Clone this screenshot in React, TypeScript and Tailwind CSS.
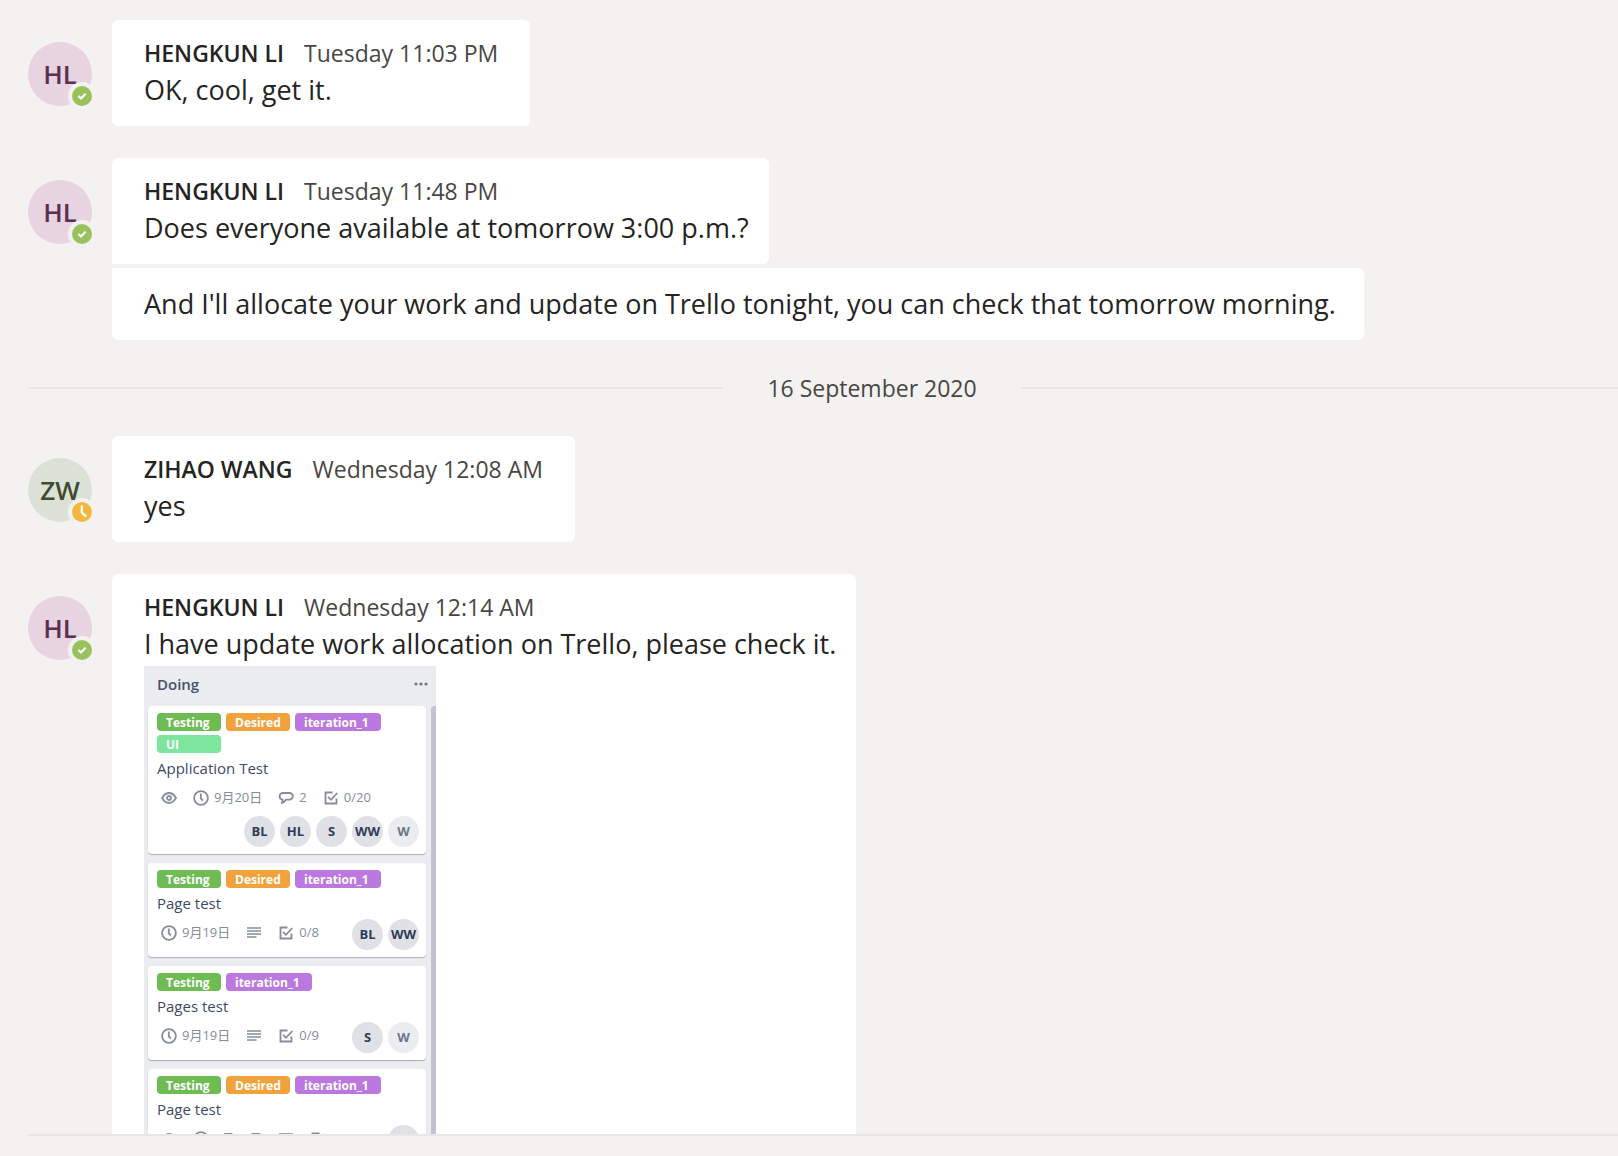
import React from "react";

type Presence = "available" | "away";

const PEOPLE = {
  HL: { initials: "HL", name: "HENGKUN LI", presence: "available" as Presence, tone: "bg-[#e8d4e0] text-[#5b2f4f]" },
  ZW: { initials: "ZW", name: "ZIHAO WANG", presence: "away" as Presence, tone: "bg-[#dbe1d7] text-[#404a2f]" },
};

function PresenceBadge({ presence }: { presence: Presence }) {
  return (
    <svg
      viewBox="0 0 28 28"
      role="img"
      aria-label={presence}
      className="absolute -right-1 -bottom-1 size-7"
    >
      <circle cx="14" cy="14" r="14" fill="#f3f2f0" />
      {presence === "available" ? (
        <>
          <circle cx="14" cy="14" r="10" fill="#9ac25c" />
          <path d="M10.4 14l2.500 2.500 4.800-4.800" fill="none" stroke="#fff" strokeWidth="2.200" />
        </>
      ) : (
        <>
          <circle cx="14" cy="14" r="10" fill="#f5b83f" />
          <path d="M13.8 7.4v7.2l4.4 4" fill="none" stroke="#fff" strokeWidth="2.200" />
        </>
      )}
    </svg>
  );
}

function Avatar({ who }: { who: keyof typeof PEOPLE }) {
  const p = PEOPLE[who];
  return (
    <div
      className={`relative mt-[22px] flex size-16 shrink-0 items-center justify-center rounded-full text-[26px] leading-none font-semibold ${p.tone}`}
    >
      {p.initials}
      <PresenceBadge presence={p.presence} />
    </div>
  );
}

function Message({
  who,
  time,
  text,
  followUp,
  children,
}: {
  who: keyof typeof PEOPLE;
  time: string;
  text: string;
  followUp?: string;
  children?: React.ReactNode;
}) {
  return (
    <article className="flex items-start gap-5">
      <Avatar who={who} />
      <div className="flex flex-col items-start gap-1">
        <div className={`rounded-md bg-white px-8 pt-[15px] pb-[17px] ${followUp ? "rounded-bl-none" : ""}`}>
          <header className="flex h-9 items-center gap-5 text-[23px]">
            <h2 className="font-semibold">{PEOPLE[who].name}</h2>
            <time className="text-[#484644]">{time}</time>
          </header>
          <p className="-mr-3 h-[38px] text-[27px] leading-[38px]">{text}</p>
          {children}
        </div>
        {followUp && (
          <div className="rounded-md rounded-tl-none bg-white py-4 pr-7 pl-8">
            <p className="text-[27px] leading-10">{followUp}</p>
          </div>
        )}
      </div>
    </article>
  );
}

const iconProps = {
  viewBox: "0 0 16 16",
  fill: "none",
  stroke: "currentColor",
  strokeWidth: 1.8,
  className: "size-4 shrink-0",
  "aria-hidden": true,
};

const EyeIcon = () => (
  <svg {...iconProps}>
    <path d="M1 8c2-3.400 4.400-5 7-5s5 1.600 7 5c-2 3.400-4.400 5-7 5s-5-1.600-7-5z" />
    <circle cx="8" cy="8" r="2" />
  </svg>
);
const ClockIcon = () => (
  <svg {...iconProps}>
    <circle cx="8" cy="8" r="6.900" />
    <path d="M7.800 3.500v5l2 2" />
  </svg>
);
const CommentIcon = () => (
  <svg {...iconProps}>
    <path
      d="M5 3h6.500a3.300 3.300 0 0 1 0 6.600H8.200C7 11.500 5.500 12.800 3.600 13c.9-1 1.200-2.200 1.100-3.400C2.800 9.400 1.600 8 1.600 6.300 1.600 4.500 3.100 3 5 3z"
      strokeLinejoin="round"
    />
  </svg>
);
const ChecklistIcon = () => (
  <svg {...iconProps}>
    <path d="M9.500 2.500h-7v11h11V8.500" />
    <path d="M5 6.800l3 3 6.300-6.800" />
  </svg>
);
const DescriptionIcon = () => (
  <svg {...iconProps}>
    <path d="M1 3h14M1 6h14M1 9h14M1 12h9.500" strokeWidth="1.700" />
  </svg>
);

const LABELS = {
  Testing: "w-16 bg-[#6fbb54]",
  Desired: "w-16 bg-[#f2a23c]",
  iteration_1: "w-[86px] bg-[#bb78de]",
  UI: "w-16 bg-[#7ee59e]",
};

function Label({ name }: { name: keyof typeof LABELS }) {
  return (
    <span className={`h-[18px] rounded px-[9px] text-[12px] leading-5 font-bold text-white ${LABELS[name]}`}>
      {name}
    </span>
  );
}

function Members({ initials }: { initials: string[] }) {
  return (
    <div className="ml-auto flex gap-[5px]">
      {initials.map((m) => (
        <span
          key={m}
          className={`flex size-[31px] items-center justify-center rounded-full text-[13px] font-bold ${
            m === "W" ? "bg-[#ebecf0] text-[#6b7488]" : "bg-[#dfe1e6] text-[#2f3b57]"
          }`}
        >
          {m}
        </span>
      ))}
    </div>
  );
}

function Card({
  labels,
  title,
  meta,
  members,
  membersBelow,
}: {
  labels: (keyof typeof LABELS)[];
  title: string;
  meta: React.ReactNode;
  members: string[];
  membersBelow?: boolean;
}) {
  return (
    <li className="rounded bg-white pt-[7px] pr-[7px] pb-[7px] pl-[9px] shadow-[0_1px_1px_#a9aebb]">
      <div className="flex flex-wrap gap-x-[5px] gap-y-1">
        {labels.map((l) => (
          <Label key={l} name={l} />
        ))}
      </div>
      <h4 className="mt-[3px] text-[15px] leading-6 text-[#3d4a66]">{title}</h4>
      <div className="mt-1 flex items-start">
        <div className="flex h-7 items-center gap-4 pl-1 text-[13px] text-[#858c9c]">{meta}</div>
        {!membersBelow && <Members initials={members} />}
      </div>
      {membersBelow && (
        <div className="mt-1 flex">
          <Members initials={members} />
        </div>
      )}
    </li>
  );
}

function Meta({ icon, children }: { icon: React.ReactNode; children?: React.ReactNode }) {
  return (
    <span className="flex items-center gap-[5px]">
      {icon}
      {children}
    </span>
  );
}

function Board() {
  return (
    <section className="mt-[3px] flex w-[292px] flex-col bg-[#ebecf0] pl-1">
      <header className="flex h-10 items-center justify-between pr-2 pb-1 pl-[9px]">
        <h3 className="text-[15px] font-semibold text-[#485268]">Doing</h3>
        <button type="button" aria-label="List actions" className="text-[#6b7488]">
          <svg viewBox="0 0 14 4" className="h-1 w-3.5" fill="currentColor">
            <circle cx="2" cy="2" r="1.600" />
            <circle cx="7" cy="2" r="1.600" />
            <circle cx="12" cy="2" r="1.600" />
          </svg>
        </button>
      </header>
      <div className="flex justify-between">
        <ul className="flex w-[278px] flex-col gap-[9px]">
          <Card
            labels={["Testing", "Desired", "iteration_1", "UI"]}
            title="Application Test"
            members={["BL", "HL", "S", "WW", "W"]}
            membersBelow
            meta={
              <>
                <Meta icon={<EyeIcon />} />
                <Meta icon={<ClockIcon />}>9月20日</Meta>
                <Meta icon={<CommentIcon />}>2</Meta>
                <Meta icon={<ChecklistIcon />}>0/20</Meta>
              </>
            }
          />
          <Card
            labels={["Testing", "Desired", "iteration_1"]}
            title="Page test"
            members={["BL", "WW"]}
            meta={
              <>
                <Meta icon={<ClockIcon />}>9月19日</Meta>
                <Meta icon={<DescriptionIcon />} />
                <Meta icon={<ChecklistIcon />}>0/8</Meta>
              </>
            }
          />
          <Card
            labels={["Testing", "iteration_1"]}
            title="Pages test"
            members={["S", "W"]}
            meta={
              <>
                <Meta icon={<ClockIcon />}>9月19日</Meta>
                <Meta icon={<DescriptionIcon />} />
                <Meta icon={<ChecklistIcon />}>0/9</Meta>
              </>
            }
          />
          <Card
            labels={["Testing", "Desired", "iteration_1"]}
            title="Page test"
            members={["WW"]}
            meta={
              <>
                <Meta icon={<EyeIcon />} />
                <Meta icon={<ClockIcon />}>9月19日</Meta>
                <Meta icon={<DescriptionIcon />} />
                <Meta icon={<ChecklistIcon />}>0/11</Meta>
              </>
            }
          />
        </ul>
        <div className="w-[5px] rounded-tl bg-[#c1c4d0]" />
      </div>
    </section>
  );
}

export default function App() {
  return (
    <div className="flex h-screen flex-col overflow-hidden bg-[#f3f2f0] pl-7 font-['Open_Sans','Noto_Sans_CJK_SC',sans-serif] text-[#252423]">
      <main className="flex min-h-0 flex-1 flex-col gap-8 overflow-hidden pt-5">
        <Message who="HL" time="Tuesday 11:03 PM" text="OK, cool, get it." />
        <Message
          who="HL"
          time="Tuesday 11:48 PM"
          text="Does everyone available at tomorrow 3:00 p.m.?"
          followUp="And I'll allocate your work and update on Trello tonight, you can check that tomorrow morning."
        />
        <div className="-mr-[98px] flex h-8 shrink-0 items-center gap-11 text-[23px] text-[#484644]">
          <span className="h-0.5 flex-1 bg-[#e8e7e5]" />
          <time>16 September 2020</time>
          <span className="h-0.5 flex-1 bg-[#e8e7e5]" />
        </div>
        <Message who="ZW" time="Wednesday 12:08 AM" text="yes" />
        <Message who="HL" time="Wednesday 12:14 AM" text="I have update work allocation on Trello, please check it.">
          <Board />
        </Message>
      </main>
      <footer className="h-[22px] shrink-0 border-t-2 border-[#e8e7e5]" />
    </div>
  );
}
